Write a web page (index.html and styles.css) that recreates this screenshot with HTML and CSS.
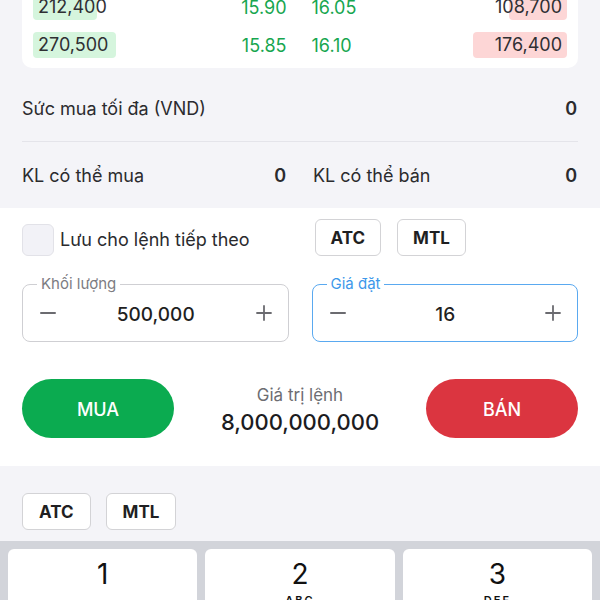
FILE: index.html
```html
<!DOCTYPE html>
<html lang="vi">
<head>
    <meta charset="UTF-8">
    <meta name="viewport" content="width=device-width, initial-scale=1.0">
    <title>Đặt lệnh</title>
    <link rel="stylesheet" href="styles.css">
</head>
<body>

    <div class="top">
        <div class="book">
            <div class="book-row">
                <div class="side">
                    <span class="vol buy"><i class="bar" style="width: 64px"></i>212,400</span>
                    <span class="price">15.90</span>
                </div>
                <div class="side">
                    <span class="price">16.05</span>
                    <span class="vol sell"><i class="bar" style="width: 58px"></i>108,700</span>
                </div>
            </div>
            <div class="book-row">
                <div class="side">
                    <span class="vol buy"><i class="bar" style="width: 83px"></i>270,500</span>
                    <span class="price">15.85</span>
                </div>
                <div class="side">
                    <span class="price">16.10</span>
                    <span class="vol sell"><i class="bar" style="width: 94px"></i>176,400</span>
                </div>
            </div>
        </div>

        <div class="info">
            <div class="info-row first">
                <span>Sức mua tối đa (VND)</span>
                <b>0</b>
            </div>
            <div class="info-row split">
                <div class="pair"><span>KL có thể mua</span><b>0</b></div>
                <div class="pair"><span>KL có thể bán</span><b>0</b></div>
            </div>
        </div>
    </div>

    <div class="order">
        <div class="grid">
            <label class="check">
                <span class="box"></span>
                <span>Lưu cho lệnh tiếp theo</span>
            </label>
            <div class="chips">
                <button class="chip">ATC</button>
                <button class="chip">MTL</button>
            </div>
        </div>

        <div class="grid fields">
            <div class="field">
                <span class="field-label">Khối lượng</span>
                <button class="step"><svg width="16" height="16" viewBox="0 0 16 16"><path d="M1 8h14" stroke="#6b6b70" stroke-width="2" stroke-linecap="round"/></svg></button>
                <span class="field-value">500,000</span>
                <button class="step"><svg width="16" height="16" viewBox="0 0 16 16"><path d="M1 8h14M8 1v14" stroke="#6b6b70" stroke-width="1.8" stroke-linecap="round"/></svg></button>
            </div>
            <div class="field active">
                <span class="field-label">Giá đặt</span>
                <button class="step"><svg width="16" height="16" viewBox="0 0 16 16"><path d="M1 8h14" stroke="#6b6b70" stroke-width="2" stroke-linecap="round"/></svg></button>
                <span class="field-value">16</span>
                <button class="step"><svg width="16" height="16" viewBox="0 0 16 16"><path d="M1 8h14M8 1v14" stroke="#6b6b70" stroke-width="1.8" stroke-linecap="round"/></svg></button>
            </div>
        </div>

        <div class="actions">
            <button class="btn buy-btn">MUA</button>
            <div class="total">
                <span class="total-label">Giá trị lệnh</span>
                <span class="total-value">8,000,000,000</span>
            </div>
            <button class="btn sell-btn">BÁN</button>
        </div>
    </div>

    <div class="bottom">
        <div class="chips">
            <button class="chip light">ATC</button>
            <button class="chip light">MTL</button>
        </div>
    </div>

    <div class="keyboard">
        <div class="key"><span class="digit">1</span><span class="letters">&nbsp;</span></div>
        <div class="key"><span class="digit">2</span><span class="letters">ABC</span></div>
        <div class="key"><span class="digit">3</span><span class="letters">DEF</span></div>
    </div>

</body>
</html>
```

FILE: styles.css
```css
body {
    margin: 0;
    width: 600px;
    height: 600px;
    overflow: hidden;
    font-family: Inter, 'Noto Sans', sans-serif;
    color: #2b2b2e;
    background-color: #fff;
}

button {
    font-family: inherit;
    cursor: pointer;
}

/* order book + account info */
.top {
    background-color: #f4f4f8;
    padding: 0 22px 15px;
}

.book {
    background-color: #fff;
    border-radius: 0 0 10px 10px;
    margin-top: -12px;
    padding: 0 11px 4px;
}

.book-row {
    display: grid;
    grid-template-columns: 1fr 1fr;
    column-gap: 23px;
    height: 38px;
    align-items: center;
}

.side {
    display: flex;
    justify-content: space-between;
    align-items: center;
}

.vol {
    position: relative;
    isolation: isolate;
    font-size: 18px;
    line-height: 26px;
    padding: 0 5px;
    color: #2f2f33;
}

.vol .bar {
    position: absolute;
    top: 0;
    bottom: 0;
    border-radius: 4px;
    z-index: -1;
}

.vol.buy .bar {
    left: 0;
    background-color: #d5f5dd;
}

.vol.sell .bar {
    right: 0;
    background-color: #fdd6d6;
}

.price {
    font-size: 18px;
    color: #17a64f;
}

.side:first-child .price {
    padding-right: 2px;
}

.info {
    font-size: 18px;
}

.info-row {
    display: flex;
    justify-content: space-between;
    align-items: center;
    line-height: 34px;
}

.info-row.first {
    padding: 24px 0 15px;
    border-bottom: 1px solid #e4e4ea;
}

.info-row.split {
    display: grid;
    grid-template-columns: 1fr 1fr;
    column-gap: 26px;
    padding-top: 17px;
}

.pair {
    display: flex;
    justify-content: space-between;
}

.info b {
    font-weight: 600;
    padding-right: 1px;
}

/* order form */
.order {
    padding: 11px 22px 28px;
}

.grid {
    display: grid;
    grid-template-columns: 1fr 1fr;
    column-gap: 23px;
    align-items: center;
}

.check {
    display: flex;
    align-items: center;
    gap: 6px;
    font-size: 18px;
    padding-top: 4px;
}

.box {
    width: 30px;
    height: 30px;
    border: 1px solid #e2e2e8;
    border-radius: 6px;
    background-color: #f2f2f7;
}

.chips {
    display: flex;
    gap: 16px;
    padding-left: 3px;
}

.chip {
    height: 37px;
    padding: 0 15px;
    border: 1.5px solid #d3d3d6;
    border-radius: 6px;
    background-color: #fff;
    font-size: 17px;
    font-weight: 700;
    color: #1f1f22;
}

.fields {
    margin-top: 28px;
}

.field {
    position: relative;
    height: 58px;
    box-sizing: border-box;
    border: 1.5px solid #cfcfd3;
    border-radius: 8px;
    display: flex;
    align-items: center;
    padding: 0 12px 0 13px;
}

.field.active {
    border-color: #5aa9f0;
}

.field-label {
    position: absolute;
    top: -11px;
    left: 14px;
    padding: 0 4px;
    background-color: #fff;
    font-size: 15px;
    line-height: 20px;
    color: #7c7c82;
}

.field.active .field-label {
    color: #3d98ea;
}

.step {
    border: none;
    background: none;
    padding: 4px;
    display: flex;
}

.field-value {
    flex: 1;
    text-align: center;
    font-size: 19px;
    font-weight: 500;
    color: #1f1f22;
    padding-top: 2px;
}

.actions {
    margin-top: 37px;
    display: flex;
    justify-content: space-between;
    align-items: center;
}

.btn {
    width: 152px;
    height: 59px;
    border: none;
    border-radius: 30px;
    color: #fff;
    font-size: 18px;
    font-weight: 500;
    padding-top: 3px;
}

.buy-btn {
    background-color: #0bab50;
}

.sell-btn {
    background-color: #db3540;
}

.total {
    display: flex;
    flex-direction: column;
    align-items: center;
    gap: 4px;
    padding-top: 3px;
}

.total-label {
    font-size: 17px;
    color: #6d6d72;
}

.total-value {
    font-size: 22px;
    font-weight: 500;
    color: #1c1c1f;
}

/* quick chips above keyboard */
.bottom {
    background-color: #f4f4f8;
    padding: 27px 19px 11px;
}

.bottom .chips {
    gap: 15px;
}

.chip.light {
    padding: 0 16px;
    border-width: 1px;
}

.keyboard {
    background-color: #d2d4da;
    padding: 8px 8px 0;
    display: grid;
    grid-template-columns: repeat(3, 1fr);
    gap: 8px;
    height: 60px;
}

.key {
    background-color: #fff;
    border-radius: 6px;
    display: flex;
    flex-direction: column;
    align-items: center;
    padding-top: 6px;
    height: 70px;
}

.digit {
    font-size: 28px;
    line-height: 38px;
    color: #111;
}

.letters {
    font-size: 11px;
    font-weight: 600;
    letter-spacing: 2px;
    color: #111;
}
```
